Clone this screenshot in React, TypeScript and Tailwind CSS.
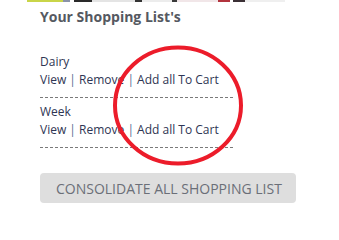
const strip = [
  { w: 27, c: "bg-white" },
  { w: 36, c: "bg-[#c9d548]" },
  { w: 7, c: "bg-[#8a93a8]" },
  { w: 4, c: "bg-white" },
  { w: 18, c: "bg-[#2a2a2a]" },
  { w: 43, c: "bg-[#e4e4e4]" },
  { w: 7, c: "bg-[#333333]" },
  { w: 30, c: "bg-[#ececec]" },
  { w: 5, c: "bg-[#3a3a3a]" },
  { w: 41, c: "bg-[#f1e6e8]" },
  { w: 12, c: "bg-[#b2343e]" },
  { w: 3, c: "bg-white" },
  { w: 12, c: "bg-[#3b3035]" },
  { w: 40, c: "bg-[#efefef]" },
];

function ListItem({ name }: { name: string }) {
  return (
    <div className="w-[193px] border-b border-dashed border-[#7a7a7a] pb-[8px]">
      <div className="leading-[18px]">{name}</div>
      <div className="leading-[18px] whitespace-nowrap">
        <a className="cursor-pointer">View</a>
        <span className="text-[#5a6c92]"> | </span>
        <a className="cursor-pointer">Remove</a>
        <span className="text-[#5a6c92]"> | </span>
        <a className="cursor-pointer">Add all To Cart</a>
      </div>
    </div>
  );
}

export default function App() {
  return (
    <div className="relative w-[339px] h-[225px] bg-white overflow-hidden font-['Open_Sans',sans-serif]">
      <div className="flex h-[2px]">
        {strip.map((s, i) => (
          <div key={i} className={s.c} style={{ width: s.w }} />
        ))}
      </div>

      <div className="pl-[40px] pt-[5px]">
        <h2 className="text-[14px] leading-[20px] font-bold text-[#555961]">Your Shopping List's</h2>

        <div className="mt-[26px] flex flex-col gap-[5px] text-[12px] text-[#2e3553]">
          <ListItem name="Dairy" />
          <ListItem name="Week" />
        </div>

        <button className="mt-[25px] h-[30px] w-[256px] rounded-[4px] bg-[#dedede] text-[14px] text-[#6b6f78] uppercase text-left pl-[16px]">
          Consolidate all shopping list
        </button>
      </div>

      <svg className="absolute left-0 top-0 pointer-events-none" width="339" height="225">
        <ellipse cx="178" cy="105.5" rx="63" ry="58" fill="none" stroke="#ec1c2a" strokeWidth="4" />
      </svg>
    </div>
  );
}
